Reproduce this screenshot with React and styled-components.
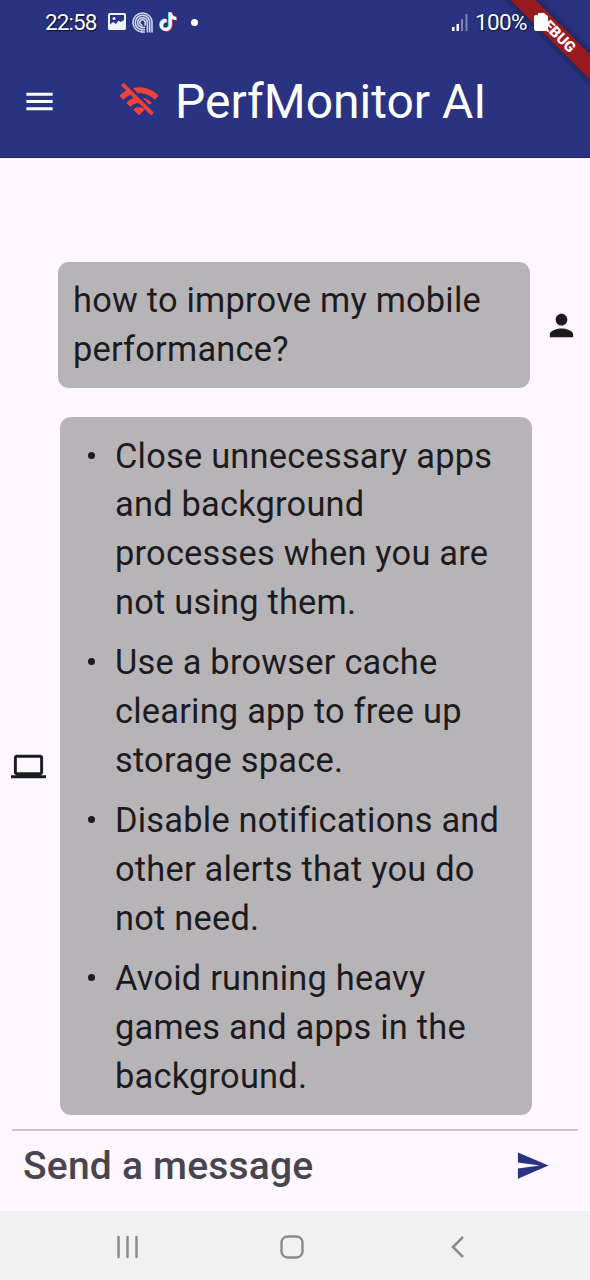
import React from 'react';
import styled, { createGlobalStyle } from 'styled-components';

const Global = createGlobalStyle`
  * { box-sizing: border-box; }
  body { margin: 0; background: #fef7ff; font-family: Roboto, "Liberation Sans", sans-serif; }
  svg { display: block; flex: none; }
`;

const Screen = styled.div`
  position: relative;
  display: flex;
  flex-direction: column;
  width: 590px;
  height: 1280px;
  overflow: hidden;
  background: #fef7ff;
`;

const Header = styled.header`
  height: 158px;
  background: #293381;
  color: #fff;
  border-bottom: 1px solid #222b70;
`;

const StatusBar = styled.div`
  position: relative;
  z-index: 2;
  display: flex;
  align-items: center;
  justify-content: space-between;
  height: 44px;
  padding: 0 42px 0 45px;
`;

const StatusGroup = styled.div`
  display: flex;
  align-items: center;
  gap: ${(p) => p.$gap}px;
`;

const StatusText = styled.span`
  margin-right: ${(p) => p.$after || 0}px;
  font-size: 22.5px;
  line-height: 26px;
  letter-spacing: ${(p) => p.$spacing || 0}px;
  text-shadow: 0 0 2px #101540, 1px 1px 1px #101540;
`;

const MoreDot = styled.span`
  width: 7px;
  height: 7px;
  margin-left: 7px;
  border-radius: 50%;
  background: #fff;
`;

const AppBar = styled.div`
  display: flex;
  align-items: center;
  height: 114px;
  padding-left: 22px;
`;

const Title = styled.h1`
  margin: 1px 0 0 15px;
  font-size: 48px;
  font-weight: 400;
  line-height: 56px;
  white-space: nowrap;
`;

const WifiSlot = styled.span`
  margin-left: 61px;
`;

const Ribbon = styled.div`
  position: absolute;
  z-index: 1;
  top: 24px;
  right: -51px;
  width: 170px;
  height: 18px;
  transform: rotate(45deg);
  background: #981a20;
  box-shadow: 0 0 9px rgba(0, 0, 0, 0.5);
  color: #fff;
  font-size: 15px;
  font-weight: 900;
  line-height: 18px;
  text-align: center;
`;

const Conversation = styled.main`
  display: flex;
  flex-direction: column;
  gap: 29px;
  height: 971px;
  padding-top: 104px;
`;

const MessageRow = styled.div`
  display: flex;
  align-items: center;
  padding-left: ${(p) => p.$left}px;
  gap: ${(p) => p.$gap}px;
`;

const Bubble = styled.div`
  width: 472px;
  height: ${(p) => p.$height}px;
  padding: 14px 15px;
  border-radius: 11px;
  background: #b7b4b8;
  color: #1d1b20;
  font-size: 34.4px;
  line-height: 48.7px;
  letter-spacing: 0.22px;
  white-space: nowrap;
`;

const Tips = styled.ul`
  display: flex;
  flex-direction: column;
  gap: 11.9px;
  margin: 0;
  padding: 0.5px 0 0;
  list-style: none;
`;

const Tip = styled.li`
  display: flex;
`;

const Bullet = styled.span`
  width: 7px;
  height: 7px;
  margin: 20px 20px 0 13px;
  border-radius: 50%;
  background: #1d1b20;
`;

const Composer = styled.div`
  display: flex;
  align-items: center;
  justify-content: space-between;
  height: 82px;
  margin: 0 12px;
  padding: 0 28px 11px 11px;
  border-top: 2px solid #cac4d0;
`;

const Placeholder = styled.span`
  padding-top: 1px;
  color: #49454f;
  font-size: 39px;
  font-weight: 500;
  line-height: 46px;
  letter-spacing: 0.2px;
`;

const NavBar = styled.nav`
  display: flex;
  align-items: center;
  justify-content: space-between;
  height: 69px;
  padding: 2px 125px 0 115px;
  background: #f1f1f1;
`;

const HomeSlot = styled.span`
  margin-right: 4px;
`;

const tips = [
  ['Close unnecessary apps', 'and background', 'processes when you are', 'not using them.'],
  ['Use a browser cache', 'clearing app to free up', 'storage space.'],
  ['Disable notifications and', 'other alerts that you do', 'not need.'],
  ['Avoid running heavy', 'games and apps in the', 'background.'],
];

const Lines = ({ items }) => (
  <div>
    {items.map((line) => (
      <div key={line}>{line}</div>
    ))}
  </div>
);

const PictureIcon = () => (
  <svg width="18" height="18" viewBox="0 0 18 18">
    <path fill="#eef0fb" fillRule="evenodd" d="M1.500 0h15Q18 0 18 1.500v14q0 1.500-1.500 1.500h-15Q0 17 0 15.500v-14Q0 0 1.500 0zM2 2v9.500l3-2.500 3 2 2.500-3.500 2 1.500L16 7V2z" />
    <circle cx="6" cy="5.500" r="1.500" fill="#eef0fb" />
  </svg>
);

const SpiralIcon = () => (
  <svg width="21" height="21" viewBox="0 0 21 21" fill="none" stroke="#d3d6ef" strokeWidth="1.600">
    <path d="M10.500 20A9.500 9.500 0 1 1 20 10.500V20.500" />
    <path d="M10.500 17.700A7.200 7.200 0 1 1 17.700 10.500v10" />
    <path d="M10.500 15.400A4.900 4.900 0 1 1 15.400 10.500v10" />
    <path d="M10.500 13.200A2.700 2.700 0 1 1 13.200 10.500v3" />
    <path d="M9 20h4M9 17.700h4M9 15.400h4" />
  </svg>
);

const notePath = 'M9 1h3c.3 2.600 1.800 4.200 4.500 4.500v3c-1.700 0-3.200-.5-4.500-1.400v6.400a6 6 0 1 1-5.200-6v3.200a2.900 2.900 0 1 0 2.200 2.800z';

const NoteIcon = () => (
  <svg width="19" height="22" viewBox="0 0 19 22">
    <path d={notePath} fill="#35dfe4" />
    <path d={notePath} fill="#f03a62" transform="translate(1.600 1.200)" />
    <path d={notePath} fill="#fff" transform="translate(.8 .6)" />
  </svg>
);

const SignalIcon = () => (
  <svg width="16" height="17" viewBox="0 0 16 17" fill="#fff">
    <path d="M0 13h2.500v4H0zM4.500 10H7v7H4.500z" />
    <path opacity=".4" d="M9 5h2v12H9zM13.500 0h2v17h-2z" />
  </svg>
);

const BatteryIcon = () => (
  <svg width="14" height="18" viewBox="0 0 14 18" fill="#fff">
    <path d="M4 0h6v2h2q2 0 2 2v12q0 2-2 2H2q-2 0-2-2V4q0-2 2-2h2z" />
  </svg>
);

export default function App() {
  return (
    <>
      <Global />
      <Screen>
        <Header>
          <StatusBar>
            <StatusGroup $gap={6}>
              <StatusText $spacing={-0.9} $after={5}>22:58</StatusText>
              <PictureIcon />
              <SpiralIcon />
              <NoteIcon />
              <MoreDot />
            </StatusGroup>
            <StatusGroup $gap={7}>
              <SignalIcon />
              <StatusText $spacing={-0.6}>100%</StatusText>
              <BatteryIcon />
            </StatusGroup>
          </StatusBar>
          <AppBar>
            <svg width="35" height="35" viewBox="0 0 24 24" fill="#fff">
              <path d="M3 18h18v-2H3v2zm0-5h18v-2H3v2zm0-7v2h18V6H3z" />
            </svg>
            <WifiSlot>
              <svg width="42" height="42" viewBox="0 0 24 24" fill="#f44336">
                <path stroke="#f44336" strokeWidth=".45" d="M22.990 9C19.150 5.160 13.800 3.760 8.840 4.780l2.520 2.520c3.470-.17 6.990 1.050 9.630 3.700l2-2zm-4 4c-1.290-1.290-2.840-2.130-4.490-2.560l3.530 3.530.96-.97zM2 3.050L5.070 6.100C3.600 6.820 2.220 7.780 1 9l1.990 2c1.240-1.240 2.670-2.160 4.200-2.770l2.240 2.240C7.810 10.890 6.270 11.730 5 13v.01L6.990 15c1.360-1.360 3.140-2.040 4.920-2.060L18.980 20l1.270-1.260L3.290 1.790 2 3.050zM9 17l3 3 3-3c-1.650-1.660-4.340-1.660-6 0z" />
              </svg>
            </WifiSlot>
            <Title>PerfMonitor AI</Title>
          </AppBar>
        </Header>
        <Conversation>
          <MessageRow $left={58} $gap={14}>
            <Bubble $height={126}>
              <Lines items={['how to improve my mobile', 'performance?']} />
            </Bubble>
            <svg width="35" height="35" viewBox="0 0 24 24" fill="#1d1b20">
              <path d="M12 12c2.210 0 4-1.790 4-4s-1.790-4-4-4-4 1.790-4 4 1.790 4 4 4zm0 2c-2.670 0-8 1.340-8 4v2h16v-2c0-2.660-5.330-4-8-4z" />
            </svg>
          </MessageRow>
          <MessageRow $left={11} $gap={14}>
            <svg width="35" height="35" viewBox="0 0 24 24" fill="#1d1b20">
              <path d="M20 18c1.100 0 1.990-.9 1.990-2L22 6c0-1.100-.9-2-2-2H4c-1.100 0-2 .9-2 2v10c0 1.100.9 2 2 2H0v2h24v-2h-4zM4 6h16v10H4V6z" />
            </svg>
            <Bubble $height={698}>
              <Tips>
                {tips.map((tip) => (
                  <Tip key={tip[0]}>
                    <Bullet />
                    <Lines items={tip} />
                  </Tip>
                ))}
              </Tips>
            </Bubble>
          </MessageRow>
        </Conversation>
        <Composer>
          <Placeholder>Send a message</Placeholder>
          <svg width="35" height="35" viewBox="0 0 24 24" fill="#293381">
            <path d="M2.010 21L23 12 2.010 3 2 10l15 2-15 2z" />
          </svg>
        </Composer>
        <NavBar>
          <svg width="24" height="24" viewBox="0 0 24 24" stroke="#8b8b8b" strokeWidth="2.500" strokeLinecap="round">
            <path d="M3.500 2v20M12.500 2v20M21.500 2v20" />
          </svg>
          <HomeSlot>
            <svg width="24" height="24" viewBox="0 0 24 24" fill="none" stroke="#8b8b8b" strokeWidth="2.400">
              <rect x="1.500" y="1.500" width="21" height="21" rx="6" />
            </svg>
          </HomeSlot>
          <svg width="16" height="24" viewBox="0 0 16 24" fill="none" stroke="#8b8b8b" strokeWidth="2.500">
            <path d="M14 2L4 12l10 10" />
          </svg>
        </NavBar>
        <Ribbon>DEBUG</Ribbon>
      </Screen>
    </>
  );
}
